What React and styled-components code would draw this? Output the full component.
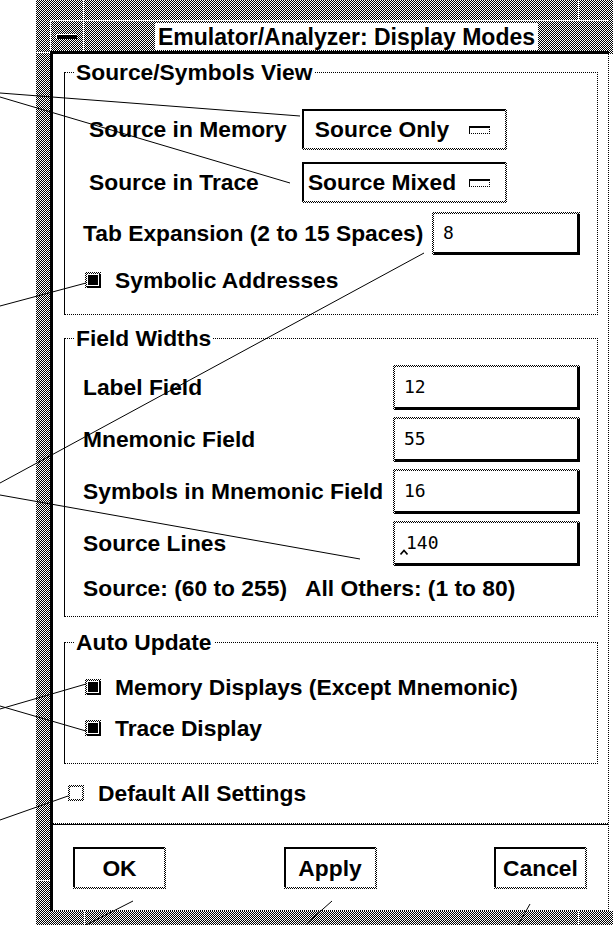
import React from 'react';
import styled, { createGlobalStyle, css } from 'styled-components';

const GlobalStyle = createGlobalStyle`
  html, body { margin: 0; padding: 0; background: #fff; }
  body {
    width: 613px; height: 925px; overflow: hidden;
    font-family: "Liberation Sans", Arial, Helvetica, sans-serif;
    color: #000;
  }
  * { box-sizing: border-box; }
`;

const stipple = css`
  background-color: #fff;
  background-image: repeating-conic-gradient(#000 0 25%, #fff 0 50%);
  background-size: 2px 2px;
`;

const labelFont = css`
  font-size: 22.8px;
  font-weight: 700;
  line-height: 1;
`;

const Page = styled.div`
  position: relative;
  width: 613px;
  height: 925px;
  display: flex;
  padding-left: 36px;
  background: #fff;
`;

const Window = styled.div`
  ${stipple}
  flex: 1;
  display: flex;
  flex-direction: column;
`;

const Band = styled.div`
  height: ${p => p.$h}px;
  flex-shrink: 0;
  display: flex;
`;

const VTick = styled.span`
  width: 1px;
  background: #fff;
  margin-left: ${p => p.$at}px;
`;

const Middle = styled.div`
  flex: 1;
  min-height: 0;
  display: flex;
`;

const LeftBand = styled.div`
  width: 14px;
  flex-shrink: 0;
  display: flex;
  flex-direction: column;
`;

const HTick = styled.span`
  height: 1px;
  background: #fff;
  margin-top: ${p => p.$at}px;
`;

const Shell = styled.div`
  flex: 1;
  display: flex;
  flex-direction: column;
`;

const RightStrip = styled.div`
  width: 4px;
  flex-shrink: 0;
  background: linear-gradient(to bottom, transparent 0 34px, #fff 34px);
`;

const TitleBar = styled.div`
  height: 31px;
  flex-shrink: 0;
  display: flex;
  border-top: 1px solid #fff;
  border-left: 1px solid #fff;
`;

const MenuButton = styled.div`
  width: 32px;
  display: flex;
  align-items: center;
  justify-content: center;
`;

const MenuGlyph = styled.span`
  width: 21px;
  height: 5px;
  background: #000;
  border-top: 1px solid #fff;
  border-left: 1px solid #fff;
  margin-left: -2px;
`;

const TitleSep = styled.span`
  width: 1px;
  background: #fff;
`;

const TitleArea = styled.div`
  flex: 1;
  display: flex;
  justify-content: center;
  align-items: flex-start;
  padding-top: 2px;
`;

const TitleLabel = styled.div`
  height: 27px;
  line-height: 28px;
  padding: 0 3px;
  background: #fff;
  font-size: 23px;
  font-weight: 700;
  white-space: nowrap;
`;

const TitleRule = styled.div`
  height: 3px;
  flex-shrink: 0;
  background: #000;
`;

const Content = styled.div`
  flex: 1;
  display: flex;
  flex-direction: column;
  background: #fff;
  border-left: 3px solid #000;
  border-right: 1px dotted #000;
  border-bottom: 1px dotted #000;
  padding-top: 6px;
`;

const Group = styled.fieldset`
  margin: ${p => p.$mt}px 10px 0 11px;
  padding: 0;
  min-width: 0;
  border: 1px dotted #000;
  border-left: 1px solid #000;
`;

const Legend = styled.legend`
  margin-left: 9px;
  padding: 0 2px;
  font-size: 22.8px;
  font-weight: 700;
  line-height: 24px;
  white-space: nowrap;
`;

const GroupBody = styled.div`
  display: flex;
  flex-direction: column;
  padding: ${p => p.$pt}px 17px ${p => p.$pb}px 18px;
`;

const Row = styled.div`
  height: ${p => p.$h}px;
  margin-top: ${p => p.$mt || 0}px;
  padding-left: ${p => p.$pl || 0}px;
  display: flex;
  align-items: center;
  gap: ${p => p.$gap || 0}px;
  flex-shrink: 0;
`;

const OptionRow = styled.div`
  height: 41px;
  margin-top: ${p => p.$mt || 0}px;
  padding-left: 6px;
  display: grid;
  grid-template-columns: 213px auto;
  align-items: center;
`;

const Label = styled.span`
  ${labelFont}
  white-space: pre;
`;

const ToggleLabel = styled(Label)`
  margin-left: 14px;
`;

const OptionBox = styled.div`
  ${stipple}
  width: 205px;
  height: 41px;
  padding: 0 2px 2px 0;
  display: flex;
`;

const OptionFace = styled.div`
  flex: 1;
  display: flex;
  align-items: center;
  padding-right: 15px;
  background: #fff;
  border-top: 2px solid #000;
  border-left: 2px solid #000;
`;

const OptionText = styled.span`
  ${labelFont}
  flex: 1;
  text-align: center;
  white-space: nowrap;
`;

const Indicator = styled.span`
  width: 21px;
  height: 8px;
  margin-left: 9px;
  border-top: 2px solid #000;
  border-left: 1px solid #000;
  border-right: 1px dotted #000;
  border-bottom: 1px dotted #000;
`;

const FieldBox = styled.div`
  ${stipple}
  margin-left: auto;
  width: ${p => p.$w}px;
  height: ${p => p.$h}px;
  padding: 2px 0 0 2px;
  display: flex;
`;

const FieldFace = styled.div`
  flex: 1;
  display: flex;
  align-items: center;
  padding-left: 9px;
  background: #fff;
  border-right: 3px solid #000;
  border-bottom: 3px solid #000;
  font-family: "DejaVu Sans Mono", "Liberation Mono", monospace;
  font-size: 18px;
  line-height: 1;
`;

const Caret = styled.svg`
  position: relative;
  top: 9px;
  margin-left: -4px;
  margin-right: -2px;
`;

const Toggle = styled.span`
  ${stipple}
  width: 16px;
  height: 16px;
  flex: none;
  margin-left: ${p => p.$ml || 0}px;
  padding: ${p => (p.$on ? '2px 0 0 2px' : '2px')};
  display: flex;
`;

const ToggleFace = styled.span`
  flex: 1;
  display: flex;
  padding: 1px;
  background: #fff;
  border-right: ${p => (p.$on ? '2px solid #000' : '0')};
  border-bottom: ${p => (p.$on ? '2px solid #000' : '0')};
`;

const ToggleFill = styled.span`
  flex: 1;
  background: ${p => (p.$on ? '#000' : '#fff')};
`;

const Separator = styled.div`
  margin-top: 16px;
  height: 2px;
  border-top: 1px dotted #000;
  border-bottom: 1px solid #000;
`;

const ButtonRow = styled.div`
  margin-top: 22px;
  padding: 0 21px 0 20px;
  display: flex;
  justify-content: space-between;
`;

const PushBox = styled.div`
  ${stipple}
  width: 93px;
  height: 42px;
  padding: 0 2px 2px 0;
  display: flex;
`;

const PushFace = styled.div`
  ${labelFont}
  flex: 1;
  display: flex;
  align-items: center;
  justify-content: center;
  background: #fff;
  border-top: 2px solid #000;
  border-left: 2px solid #000;
`;

const Overlay = styled.svg`
  position: absolute;
  left: 0;
  top: 0;
  pointer-events: none;
`;

function OptionMenu({ value }) {
  return (
    <OptionBox>
      <OptionFace>
        <OptionText>{value}</OptionText>
        <Indicator />
      </OptionFace>
    </OptionBox>
  );
}

function TextField({ w, h, value, caret }) {
  return (
    <FieldBox $w={w} $h={h}>
      <FieldFace>
        {caret && (
          <Caret width="8" height="6" viewBox="0 0 8 6">
            <polyline points="0.5,5.5 4,1.5 7.5,5.5" fill="none" stroke="#000" strokeWidth="1.6" />
          </Caret>
        )}
        {value}
      </FieldFace>
    </FieldBox>
  );
}

function CheckBox({ on, ml }) {
  return (
    <Toggle $ml={ml} $on={on}>
      <ToggleFace $on={on}>
        <ToggleFill $on={on} />
      </ToggleFace>
    </Toggle>
  );
}

function PushButton({ children }) {
  return (
    <PushBox>
      <PushFace>{children}</PushFace>
    </PushBox>
  );
}

const callouts = [
  [0, 93, 300, 116],
  [0, 97, 290, 183],
  [0, 306, 86, 283],
  [0, 483, 424, 253],
  [0, 495, 360, 559],
  [0, 709, 86, 684],
  [0, 706, 86, 731],
  [0, 820, 68, 796],
  [133, 901, 86, 925],
  [332, 901, 305, 925],
  [530, 904, 518, 925],
];

export default function App() {
  return (
    <>
      <GlobalStyle />
      <Page>
        <Window>
          <Band $h={20}>
            <VTick $at={47} />
            <VTick $at={494} />
          </Band>
          <Middle>
            <LeftBand>
              <HTick $at={32} />
              <HTick $at={827} />
            </LeftBand>
            <Shell>
              <TitleBar>
                <MenuButton>
                  <MenuGlyph />
                </MenuButton>
                <TitleSep />
                <TitleArea>
                  <TitleLabel>Emulator/Analyzer: Display Modes</TitleLabel>
                </TitleArea>
              </TitleBar>
              <TitleRule />
              <Content>
                <Group $mt={0}>
                  <Legend>Source/Symbols View</Legend>
                  <GroupBody $pt={25} $pb={20}>
                    <OptionRow>
                      <Label>Source in Memory</Label>
                      <OptionMenu value="Source Only" />
                    </OptionRow>
                    <OptionRow $mt={12}>
                      <Label>Source in Trace</Label>
                      <OptionMenu value="Source Mixed" />
                    </OptionRow>
                    <Row $h={43} $mt={9}>
                      <Label>Tab Expansion (2 to 15 Spaces)</Label>
                      <TextField w={148} h={43} value="8" />
                    </Row>
                    <Row $h={28} $mt={11}>
                      <CheckBox on ml={2} />
                      <ToggleLabel>Symbolic Addresses</ToggleLabel>
                    </Row>
                  </GroupBody>
                </Group>

                <Group $mt={11}>
                  <Legend>Field Widths</Legend>
                  <GroupBody $pt={15} $pb={14}>
                    <Row $h={45}>
                      <Label>Label Field</Label>
                      <TextField w={187} h={45} value="12" />
                    </Row>
                    <Row $h={45} $mt={7}>
                      <Label>Mnemonic Field</Label>
                      <TextField w={187} h={45} value="55" />
                    </Row>
                    <Row $h={45} $mt={7}>
                      <Label>Symbols in Mnemonic Field</Label>
                      <TextField w={187} h={45} value="16" />
                    </Row>
                    <Row $h={45} $mt={7}>
                      <Label>Source Lines</Label>
                      <TextField w={187} h={45} value="140" caret />
                    </Row>
                    <Row $h={28} $mt={8} $gap={18}>
                      <Label>Source: (60 to 255)</Label>
                      <Label>All Others: (1 to 80)</Label>
                    </Row>
                  </GroupBody>
                </Group>

                <Group $mt={13}>
                  <Legend>Auto Update</Legend>
                  <GroupBody $pt={19} $pb={21}>
                    <Row $h={28}>
                      <CheckBox on ml={2} />
                      <ToggleLabel>Memory Displays (Except Mnemonic)</ToggleLabel>
                    </Row>
                    <Row $h={28} $mt={13}>
                      <CheckBox on ml={2} />
                      <ToggleLabel>Trace Display</ToggleLabel>
                    </Row>
                  </GroupBody>
                </Group>

                <Row $h={28} $mt={15} $pl={15}>
                  <CheckBox />
                  <ToggleLabel>Default All Settings</ToggleLabel>
                </Row>

                <Separator />

                <ButtonRow>
                  <PushButton>OK</PushButton>
                  <PushButton>Apply</PushButton>
                  <PushButton>Cancel</PushButton>
                </ButtonRow>
              </Content>
            </Shell>
            <RightStrip />
          </Middle>
          <Band $h={14}>
            <VTick $at={48} />
            <VTick $at={493} />
          </Band>
        </Window>
        <Overlay width="613" height="925" viewBox="0 0 613 925">
          {callouts.map(([x1, y1, x2, y2], i) => (
            <line key={i} x1={x1} y1={y1} x2={x2} y2={y2} stroke="#000" strokeWidth="1" />
          ))}
        </Overlay>
      </Page>
    </>
  );
}
